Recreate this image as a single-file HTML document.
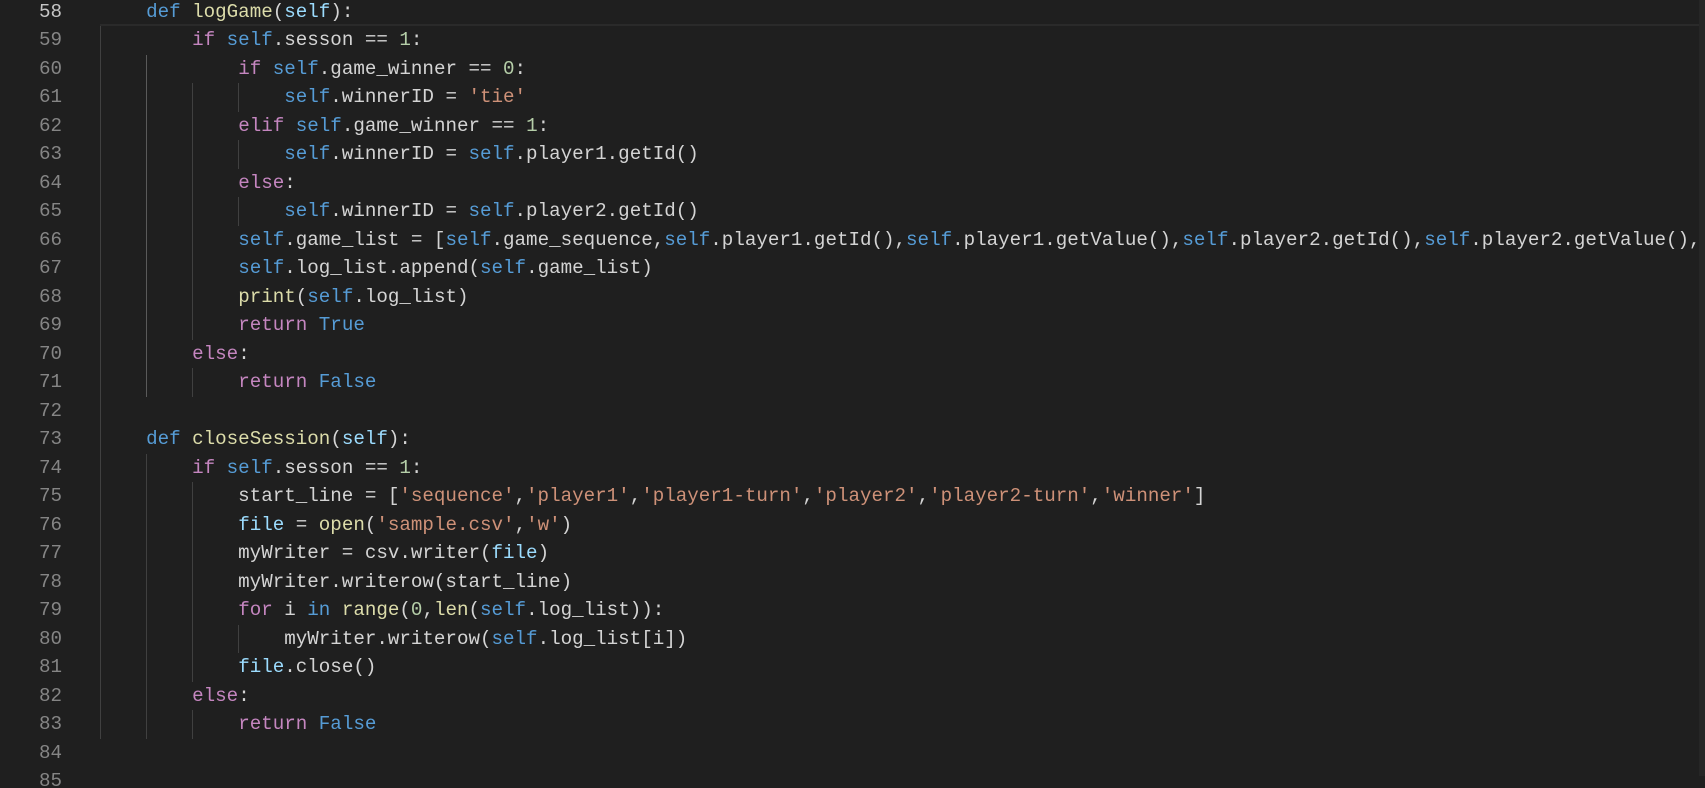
<!DOCTYPE html>
<html><head><meta charset="utf-8"><style>
html,body{margin:0;padding:0;background:#1f1f1f;width:1705px;height:776px;overflow:hidden}
#ed{position:absolute;left:0;top:-2.5px;width:1705px;height:790px;overflow:hidden;font-family:"Liberation Mono",monospace;font-size:19.2px;}
.l{position:relative;height:28.5px;line-height:28.5px;white-space:pre;color:#d4d4d4}
.n{position:absolute;left:0;width:62px;text-align:right;color:#858585}
.c{position:absolute;left:100px;}
.g{position:absolute;top:0;width:1px;height:28.5px;background:#404040}
.k{color:#c586c0}.b{color:#569cd6}.f{color:#dcdcaa}.s{color:#ce9178}.d{color:#b5cea8}.p{color:#9cdcfe}
#sb{position:absolute;right:0;top:0;width:6px;height:776px;background:#262626}
</style></head><body><div id="ed">
<div class="l"><span class="n" style="color:#c6c6c6">58</span><div style="position:absolute;left:100px;right:0;top:0;height:26.5px;border-bottom:2px solid #2a2a2a"></div><span class="c">    <span class="b">def</span> <span class="f">logGame</span>(<span class="p">self</span>):</span></div>
<div class="l"><span class="n">59</span><i class="g" style="left:100px"></i><span class="c">        <span class="k">if</span> <span class="b">self</span>.sesson == <span class="d">1</span>:</span></div>
<div class="l"><span class="n">60</span><i class="g" style="left:100px"></i><i class="g" style="left:146px;background:#5a5a5a"></i><span class="c">            <span class="k">if</span> <span class="b">self</span>.game_winner == <span class="d">0</span>:</span></div>
<div class="l"><span class="n">61</span><i class="g" style="left:100px"></i><i class="g" style="left:146px;background:#5a5a5a"></i><i class="g" style="left:192px"></i><i class="g" style="left:238px"></i><span class="c">                <span class="b">self</span>.winnerID = <span class="s">'tie'</span></span></div>
<div class="l"><span class="n">62</span><i class="g" style="left:100px"></i><i class="g" style="left:146px;background:#5a5a5a"></i><i class="g" style="left:192px"></i><span class="c">            <span class="k">elif</span> <span class="b">self</span>.game_winner == <span class="d">1</span>:</span></div>
<div class="l"><span class="n">63</span><i class="g" style="left:100px"></i><i class="g" style="left:146px;background:#5a5a5a"></i><i class="g" style="left:192px"></i><i class="g" style="left:238px"></i><span class="c">                <span class="b">self</span>.winnerID = <span class="b">self</span>.player1.getId()</span></div>
<div class="l"><span class="n">64</span><i class="g" style="left:100px"></i><i class="g" style="left:146px;background:#5a5a5a"></i><i class="g" style="left:192px"></i><span class="c">            <span class="k">else</span>:</span></div>
<div class="l"><span class="n">65</span><i class="g" style="left:100px"></i><i class="g" style="left:146px;background:#5a5a5a"></i><i class="g" style="left:192px"></i><i class="g" style="left:238px"></i><span class="c">                <span class="b">self</span>.winnerID = <span class="b">self</span>.player2.getId()</span></div>
<div class="l"><span class="n">66</span><i class="g" style="left:100px"></i><i class="g" style="left:146px;background:#5a5a5a"></i><i class="g" style="left:192px"></i><span class="c">            <span class="b">self</span>.game_list = [<span class="b">self</span>.game_sequence,<span class="b">self</span>.player1.getId(),<span class="b">self</span>.player1.getValue(),<span class="b">self</span>.player2.getId(),<span class="b">self</span>.player2.getValue(),<span class="b">self</span>.winnerID]</span></div>
<div class="l"><span class="n">67</span><i class="g" style="left:100px"></i><i class="g" style="left:146px;background:#5a5a5a"></i><i class="g" style="left:192px"></i><span class="c">            <span class="b">self</span>.log_list.append(<span class="b">self</span>.game_list)</span></div>
<div class="l"><span class="n">68</span><i class="g" style="left:100px"></i><i class="g" style="left:146px;background:#5a5a5a"></i><i class="g" style="left:192px"></i><span class="c">            <span class="f">print</span>(<span class="b">self</span>.log_list)</span></div>
<div class="l"><span class="n">69</span><i class="g" style="left:100px"></i><i class="g" style="left:146px;background:#5a5a5a"></i><i class="g" style="left:192px"></i><span class="c">            <span class="k">return</span> <span class="b">True</span></span></div>
<div class="l"><span class="n">70</span><i class="g" style="left:100px"></i><i class="g" style="left:146px;background:#5a5a5a"></i><span class="c">        <span class="k">else</span>:</span></div>
<div class="l"><span class="n">71</span><i class="g" style="left:100px"></i><i class="g" style="left:146px;background:#5a5a5a"></i><i class="g" style="left:192px"></i><span class="c">            <span class="k">return</span> <span class="b">False</span></span></div>
<div class="l"><span class="n">72</span><i class="g" style="left:100px"></i><span class="c"></span></div>
<div class="l"><span class="n">73</span><i class="g" style="left:100px"></i><span class="c">    <span class="b">def</span> <span class="f">closeSession</span>(<span class="p">self</span>):</span></div>
<div class="l"><span class="n">74</span><i class="g" style="left:100px"></i><i class="g" style="left:146px"></i><span class="c">        <span class="k">if</span> <span class="b">self</span>.sesson == <span class="d">1</span>:</span></div>
<div class="l"><span class="n">75</span><i class="g" style="left:100px"></i><i class="g" style="left:146px"></i><i class="g" style="left:192px"></i><span class="c">            start_line = [<span class="s">'sequence'</span>,<span class="s">'player1'</span>,<span class="s">'player1-turn'</span>,<span class="s">'player2'</span>,<span class="s">'player2-turn'</span>,<span class="s">'winner'</span>]</span></div>
<div class="l"><span class="n">76</span><i class="g" style="left:100px"></i><i class="g" style="left:146px"></i><i class="g" style="left:192px"></i><span class="c">            <span class="p">file</span> = <span class="f">open</span>(<span class="s">'sample.csv'</span>,<span class="s">'w'</span>)</span></div>
<div class="l"><span class="n">77</span><i class="g" style="left:100px"></i><i class="g" style="left:146px"></i><i class="g" style="left:192px"></i><span class="c">            myWriter = csv.writer(<span class="p">file</span>)</span></div>
<div class="l"><span class="n">78</span><i class="g" style="left:100px"></i><i class="g" style="left:146px"></i><i class="g" style="left:192px"></i><span class="c">            myWriter.writerow(start_line)</span></div>
<div class="l"><span class="n">79</span><i class="g" style="left:100px"></i><i class="g" style="left:146px"></i><i class="g" style="left:192px"></i><span class="c">            <span class="k">for</span> i <span class="b">in</span> <span class="f">range</span>(<span class="d">0</span>,<span class="f">len</span>(<span class="b">self</span>.log_list)):</span></div>
<div class="l"><span class="n">80</span><i class="g" style="left:100px"></i><i class="g" style="left:146px"></i><i class="g" style="left:192px"></i><i class="g" style="left:238px"></i><span class="c">                myWriter.writerow(<span class="b">self</span>.log_list[i])</span></div>
<div class="l"><span class="n">81</span><i class="g" style="left:100px"></i><i class="g" style="left:146px"></i><i class="g" style="left:192px"></i><span class="c">            <span class="p">file</span>.close()</span></div>
<div class="l"><span class="n">82</span><i class="g" style="left:100px"></i><i class="g" style="left:146px"></i><span class="c">        <span class="k">else</span>:</span></div>
<div class="l"><span class="n">83</span><i class="g" style="left:100px"></i><i class="g" style="left:146px"></i><i class="g" style="left:192px"></i><span class="c">            <span class="k">return</span> <span class="b">False</span></span></div>
<div class="l"><span class="n">84</span><span class="c"></span></div>
<div class="l"><span class="n">85</span><span class="c"></span></div>
</div><div id="sb"></div></body></html>
